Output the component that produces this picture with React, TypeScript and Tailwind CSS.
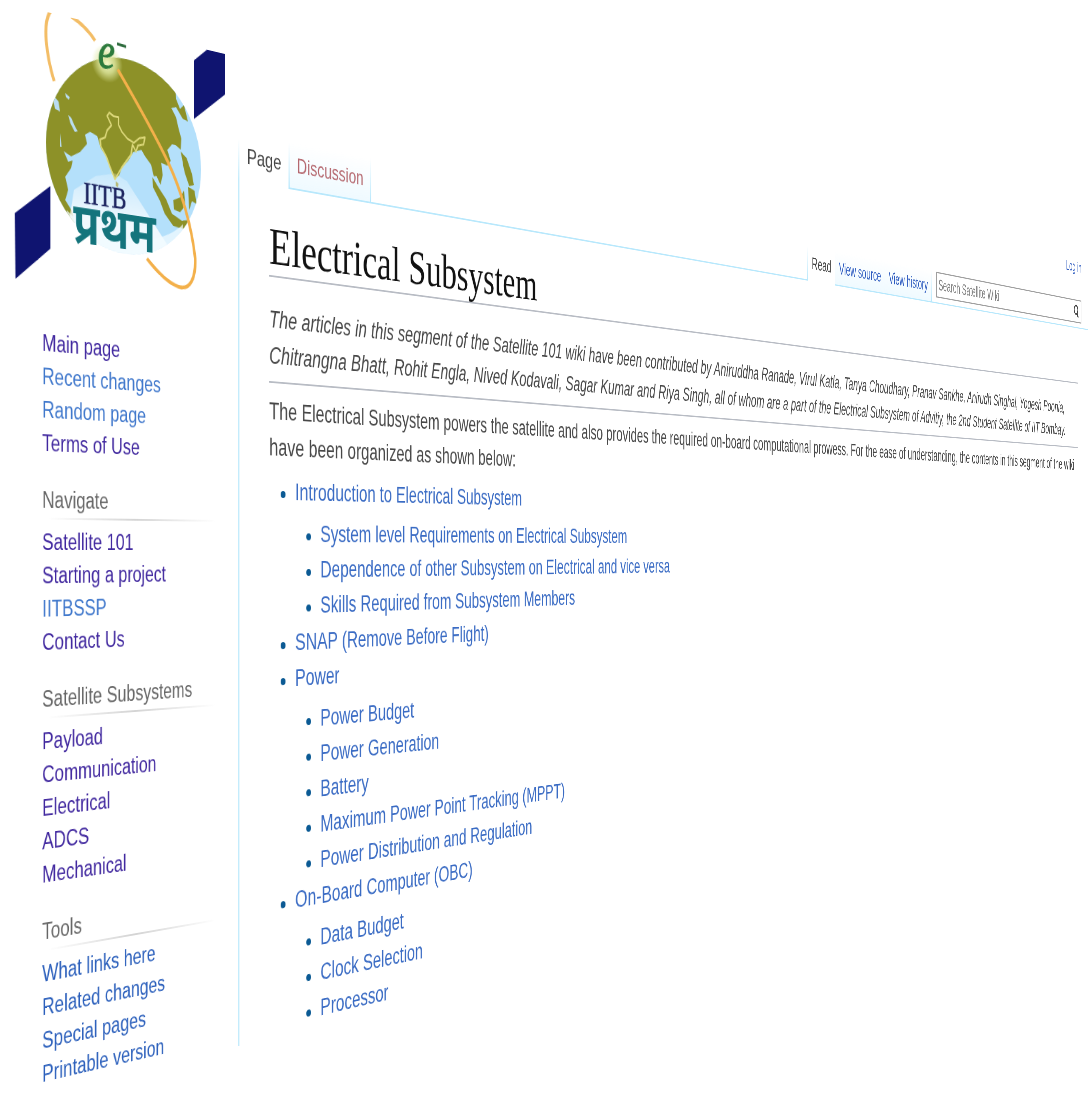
import React from "react";

type NavLink = { label: string; tone: string };
type NavGroup = { title: string; links: NavLink[] };

const VISITED = "text-[#41289f]";
const FRESH = "text-[#4078cc]";
const DEEP = "text-[#2c60bc]";

const topLinks: NavLink[] = [
  { label: "Main page", tone: VISITED },
  { label: "Recent changes", tone: FRESH },
  { label: "Random page", tone: FRESH },
  { label: "Terms of Use", tone: VISITED },
];

const groups: NavGroup[] = [
  {
    title: "Navigate",
    links: [
      { label: "Satellite 101", tone: VISITED },
      { label: "Starting a project", tone: VISITED },
      { label: "IITBSSP", tone: FRESH },
      { label: "Contact Us", tone: VISITED },
    ],
  },
  {
    title: "Satellite Subsystems",
    links: [
      { label: "Payload", tone: VISITED },
      { label: "Communication", tone: VISITED },
      { label: "Electrical", tone: VISITED },
      { label: "ADCS", tone: VISITED },
      { label: "Mechanical", tone: VISITED },
    ],
  },
  {
    title: "Tools",
    links: [
      { label: "What links here", tone: DEEP },
      { label: "Related changes", tone: DEEP },
      { label: "Special pages", tone: DEEP },
      { label: "Printable version", tone: DEEP },
    ],
  },
];

type Topic = { label: string; children?: Topic[] };

const topics: Topic[] = [
  {
    label: "Introduction to Electrical Subsystem",
    children: [
      { label: "System level Requirements on Electrical Subsystem" },
      { label: "Dependence of other Subsystem on Electrical and vice versa" },
      { label: "Skills Required from Subsystem Members" },
    ],
  },
  { label: "SNAP (Remove Before Flight)" },
  {
    label: "Power",
    children: [
      { label: "Power Budget" },
      { label: "Power Generation" },
      { label: "Battery" },
      { label: "Maximum Power Point Tracking (MPPT)" },
      { label: "Power Distribution and Regulation" },
    ],
  },
  {
    label: "On-Board Computer (OBC)",
    children: [{ label: "Data Budget" }, { label: "Clock Selection" }, { label: "Processor" }],
  },
];

function Logo() {
  return (
    <svg viewBox="0 0 340 299" className="block h-[299px] w-full" role="img" aria-label="IITB Pratham">
      <defs>
        <clipPath id="globe">
          <ellipse cx="171" cy="134" rx="111" ry="103" />
        </clipPath>
        <clipPath id="frame">
          <rect x="0" y="1" width="340" height="298" />
        </clipPath>
        <linearGradient id="beam" x1="0" y1="0" x2="0" y2="1">
          <stop offset="0" stopColor="#ffffff" stopOpacity="0.25" />
          <stop offset="0.6" stopColor="#ffffff" stopOpacity="0.8" />
          <stop offset="1" stopColor="#ffffff" stopOpacity="0.8" />
        </linearGradient>
        <radialGradient id="glow">
          <stop offset="0" stopColor="#f4f8c8" />
          <stop offset="0.5" stopColor="#dfe8a0" stopOpacity="0.8" />
          <stop offset="1" stopColor="#dfe8a0" stopOpacity="0" />
        </radialGradient>
      </defs>
      <g clipPath="url(#frame)">
        <path d="M71 70C60 44 56 14 65 1C74 -8 88 -6 95 0C108 4 118 10 127 19" fill="none" stroke="#f3bd66" strokeWidth="4" />
        <path d="M271 16L291 1L319 0V46L271 80Z" fill="#0f1470" />
        <path d="M19 211L66 178V242L20 277Z" fill="#0f1470" />
        <g clipPath="url(#globe)">
          <rect x="55" y="25" width="232" height="216" fill="#b4e0fb" />
          <path
            d="M55 25H242L244 62L250 72L256 67L262 84L254 82L244 71L237 73L244 82L248 94L252 104L251 116L243 112L238 112L231 119L236 130L231 136L222 134L224 147L221 158L215 149L211 150L207 138L198 130L193 124L181 128L174 138L165 146L161 155L155 160L148 148L143 138L135 130L130 118L120 115L113 119L116 128L106 138L94 144L84 140L90 150L96 148L94 156L86 166L90 179L86 190L95 200L99 212L75 215L50 150Z"
            fill="#8d9128"
          />
          <path
            d="M90 102L94 104L99 112L103 117L99 118L93 110Z M69 84L77 90L79 100L72 98Z M86 80L92 83L91 86L87 84Z M79 122L81 136L79 136Z"
            fill="#b9dcf0"
          />
          <path
            d="M209 151L217 160L229 172L238 187L253 193L268 190L274 182L277 191L258 202L240 200L227 188L220 175L210 162Z M240 172L250 168L256 160L258 176L250 184L241 182Z M251 118L260 124L268 140L271 152L264 154L257 140Z M262 155L272 158L275 172L268 170L264 180Z M156 162L160 164L159 168L156 167Z"
            fill="#8d9128"
          />
          <path d="M155 154L172 160L250 241H85L98 178L128 160Z" fill="url(#beam)" />
          <path d="M88 200C120 225 215 232 255 196L250 245H95Z" fill="#f2fbff" opacity="0.75" />
          <path
            d="M155 160L148 148L143 138L135 128L134 121L141 118L144 110L150 104L144 95L147 91L153 94L160 94L160 102L165 109L173 115L182 118L190 112L198 110L196 118L188 120L185 127L180 120L178 131L165 146Z"
            fill="none"
            stroke="#dcd87a"
            strokeWidth="2"
            strokeLinejoin="round"
          />
        </g>
        <ellipse cx="144" cy="40" rx="22" ry="20" fill="url(#glow)" />
        <path
          d="M159 44C184 72 212 104 232 132C252 160 268 198 273 232C274 252 266 268 248 265C230 262 214 250 201 239"
          fill="none"
          stroke="#f3b04a"
          strokeWidth="4"
        />
        <text x="131" y="45" fontFamily="'Liberation Serif', serif" fontStyle="italic" fontSize="54" fill="#2c7a3c" stroke="#2c7a3c">
          e
        </text>
        <path d="M158 17L171 18" stroke="#2c6a3c" strokeWidth="3" />
        <text x="111" y="190" fontFamily="'Liberation Serif', serif" fontSize="31" fill="#1d2560" stroke="#1d2560" strokeWidth="0.6">
          IITB
        </text>
        <text x="97" y="232" fontFamily="'Noto Sans Devanagari', 'Noto Sans', sans-serif" fontWeight="700" fontSize="59" fill="#14747c">
          प्रथम
        </text>
      </g>
    </svg>
  );
}

function LinkList({ links }: { links: NavLink[] }) {
  return (
    <ul>
      {links.map((link) => (
        <li key={link.label}>
          <a href="#" className={link.tone}>
            {link.label}
          </a>
        </li>
      ))}
    </ul>
  );
}

function Sidebar() {
  return (
    <aside className="w-[340px] shrink-0">
      <Logo />
      <nav className="mt-[23px] pr-9 pl-[55px] text-[23px] leading-[34px]">
        <LinkList links={topLinks} />
        {groups.map((group) => (
          <section key={group.title} className="mt-6">
            <h2 className="text-[#666666]">{group.title}</h2>
            <div className="mt-px mb-1.5 ml-2 h-0.5 bg-linear-to-r from-transparent via-[#d4d4d4] to-transparent" />
            <LinkList links={group.links} />
          </section>
        ))}
      </nav>
    </aside>
  );
}

function Tab({ label, tone, selected }: { label: string; tone: string; selected?: boolean }) {
  return (
    <li className={selected ? "flex" : "flex border-b-2 border-[#b8e8fc] bg-linear-to-b from-white from-30% to-[#effaff]"}>
      <a href="#" className={`px-3 pt-[33px] leading-[30px] whitespace-nowrap ${tone}`}>
        {label}
      </a>
      {!selected && <span className="w-0.5 bg-linear-to-b from-white from-30% to-[#b8e8fc]" />}
    </li>
  );
}

function TabEdge() {
  return <li aria-hidden="true" className="w-0.5 bg-linear-to-b from-white from-30% to-[#b8e8fc]" />;
}

function Header() {
  return (
    <header>
      <div className="flex h-[62px] justify-end pt-2.5 pr-[29px] text-[25px] leading-[28px]">
        <a href="#" className="text-[#2f5cc0]">
          Log in
        </a>
      </div>
      <div className="flex h-[76px] text-[25px]">
        <ul className="flex text-[24px]">
          <Tab label="Page" tone="text-[#444444]" selected />
          <TabEdge />
          <Tab label="Discussion" tone="text-[#b5686f]" />
        </ul>
        <div className="flex-1 border-b-2 border-[#b8e8fc]" />
        <ul className="flex">
          <TabEdge />
          <Tab label="Read" tone="text-[#444444]" selected />
          <Tab label="View source" tone="text-[#2f5cc0]" />
          <Tab label="View history" tone="text-[#2f5cc0]" />
        </ul>
        <div className="border-b-2 border-[#b8e8fc] pt-[23px] pr-[29px] pl-4">
          <form className="flex h-[43px] w-[582px] items-center border-2 border-[#a0a0a0] bg-white" onSubmit={(e) => e.preventDefault()}>
            <input
              type="text"
              aria-label="Search Satellite Wiki"
              placeholder="Search Satellite Wiki"
              className="h-full min-w-0 flex-1 bg-transparent px-1.5 outline-none placeholder:text-[#808080]"
            />
            <button type="submit" aria-label="Search" className="mr-2.5">
              <svg viewBox="0 0 22 26" className="h-[26px] w-[22px]" fill="none" stroke="#444444" strokeWidth="3">
                <circle cx="10" cy="10" r="8" />
                <path d="M14 16L20 24" strokeWidth="4" />
              </svg>
            </button>
          </form>
        </div>
      </div>
    </header>
  );
}

function TopicList({ items, nested }: { items: Topic[]; nested?: boolean }) {
  return (
    <ul className={nested ? "mt-[7px] mb-px pl-[43px]" : "mt-[9px] pl-[19px]"}>
      {items.map((item) => (
        <li key={item.label}>
          <div className="flex items-center gap-4">
            <span className="mt-1 size-2 rounded-full bg-[#0b5a94]" />
            <a href="#" className="text-[#3b6cc4]">
              {item.label}
            </a>
          </div>
          {item.children && <TopicList items={item.children} nested />}
        </li>
      ))}
    </ul>
  );
}

function Article() {
  return (
    <main className="pr-[46px] pl-12 text-[27px] leading-[41px] text-[#484848]">
      <h1 className="mt-9 border-b-2 border-[#b8bcc4] pb-px font-['Liberation_Serif',serif] text-[60px] leading-[64px] text-[#111111]">
        Electrical Subsystem
      </h1>
      <p className="mt-7 italic">
        The articles in this segment of the Satellite 101 wiki have been contributed by Aniruddha Ranade, Virul Katla, Tanya
        Choudhary, Pranav Sankhe, Anirudh Singhal, Yogesh Poonia, Chitrangna Bhatt, Rohit Engla, Nived Kodavali, Sagar Kumar and
        Riya Singh, all of whom are a part of the Electrical Subsystem of Advitiy, the 2nd Student Satellite of IIT Bombay.
      </p>
      <hr className="mt-2 mb-3 border-t-2 border-[#b8bcc4]" />
      <p>
        The Electrical Subsystem powers the satellite and also provides the required on-board computational prowess. For the ease
        of understanding, the contents in this segment of the wiki have been organized as shown below:
      </p>
      <TopicList items={topics} />
    </main>
  );
}

export default function App() {
  return (
    <div className="min-h-screen overflow-hidden bg-white font-['Liberation_Sans',Arial,sans-serif] perspective-[1864px] perspective-origin-[0px_549px]">
      <div className="flex w-[240vw] origin-top-left rotate-y-[38.7deg]">
        <Sidebar />
        <div className="mt-[62px] w-0.5 shrink-0 bg-linear-to-b from-white from-[30px] to-[#c4ecfc] to-[75px]" />
        <div className="min-w-0 flex-1">
          <Header />
          <Article />
        </div>
      </div>
    </div>
  );
}
